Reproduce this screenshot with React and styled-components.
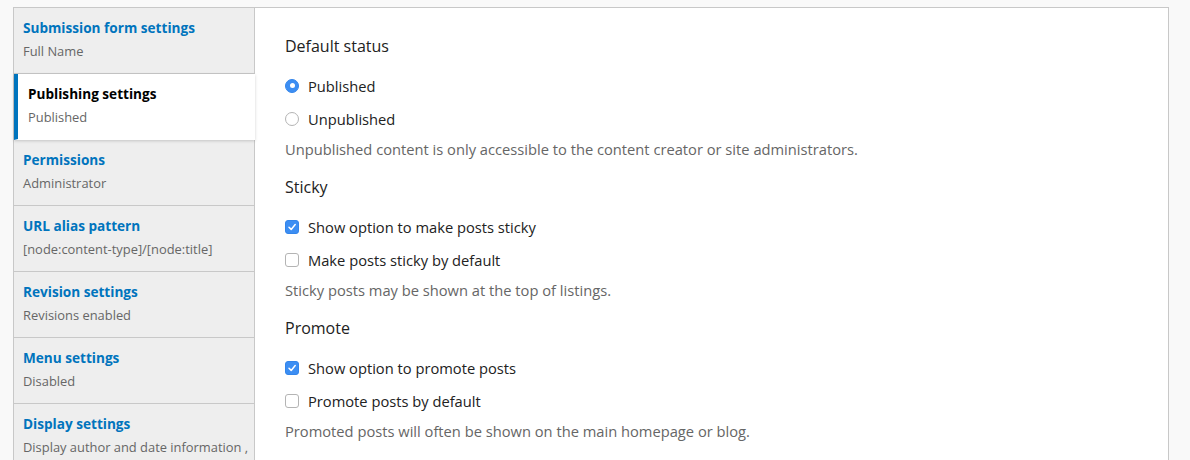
import React from "react";
import styled, { createGlobalStyle } from "styled-components";

const Global = createGlobalStyle`
  html, body { margin: 0; background: #f9f9f9; }
  body { font-family: "Open Sans", "Liberation Sans", sans-serif; color: #222; }
`;

const Page = styled.div`
  padding: 7px 21px 0 13px;
  height: 460px;
  box-sizing: border-box;
  overflow: hidden;
`;

const Tabs = styled.div`
  display: flex;
  border: 1px solid #c8c8c8;
  border-bottom: none;
  height: 460px;
  box-sizing: border-box;
`;

const Sidebar = styled.ul`
  list-style: none;
  margin: 0;
  padding: 0;
  width: 240px;
  flex-shrink: 0;
  background: #eeeeee;
  border-right: 1px solid #c8c8c8;
`;

const Item = styled.li`
  height: 66px;
  box-sizing: border-box;
  padding: ${p => (p.$active ? "10px 10px 0 10px" : "10px 10px 0 9px")};
  border-bottom: 1px solid #c8c8c8;
  position: relative;
  ${p =>
    p.$active &&
    `
    background: #fff;
    border-left: 4px solid #0074bd;
    margin-right: -1px;
    border-bottom-color: transparent;
    box-shadow: 0 1px 3px rgba(0,0,0,0.18);
    z-index: 1;
  `}
`;

const ItemTitle = styled.div`
  font-size: 13.6px;
  font-weight: 700;
  line-height: 19px;
  color: ${p => (p.$active ? "#000" : "#0074bd")};
`;

const ItemSummary = styled.div`
  margin-top: 6px;
  font-size: 12.9px;
  line-height: 17px;
  color: #666;
  white-space: nowrap;
`;

const Panel = styled.div`
  flex: 1;
  background: #fff;
  padding: 27px 31px 0 30px;
`;

const Group = styled.div`
  margin-bottom: 16px;
`;

const Heading = styled.div`
  font-size: 16px;
  line-height: 22px;
  color: #222;
  margin-bottom: 12px;
`;

const Option = styled.label`
  display: flex;
  align-items: center;
  gap: 9px;
  height: 33px;
  font-size: 14.7px;
  color: #222;
`;

const Radio = styled.span`
  width: 14px;
  height: 14px;
  box-sizing: border-box;
  border-radius: 50%;
  flex-shrink: 0;
  ${p =>
    p.$checked
      ? `background: #3c8ef3; border: 1px solid #3385ea; display:flex; align-items:center; justify-content:center;
         &::after { content: ""; width: 5px; height: 5px; border-radius: 50%; background: #fff; }`
      : `background: #fff; border: 1px solid #b4b4b4;`}
`;

const Box = styled.span`
  width: 14px;
  height: 14px;
  box-sizing: border-box;
  border-radius: 3px;
  flex-shrink: 0;
  display: flex;
  align-items: center;
  justify-content: center;
  ${p =>
    p.$checked
      ? `background: #3c8ef3; border: 1px solid #3385ea;`
      : `background: #fff; border: 1px solid #b4b4b4;`}
`;

const Desc = styled.div`
  font-size: 14.7px;
  line-height: 22px;
  color: #666;
  margin-top: 3px;
`;

const Check = () => (
  <svg width="10" height="10" viewBox="0 0 10 10">
    <path d="M2 5.2 L4.2 7.4 L8.2 2.6" fill="none" stroke="#fff" strokeWidth="1.5" strokeLinecap="round" strokeLinejoin="round" />
  </svg>
);

const items = [
  ["Submission form settings", "Full Name"],
  ["Publishing settings", "Published", true],
  ["Permissions", "Administrator"],
  ["URL alias pattern", "[node:content-type]/[node:title]"],
  ["Revision settings", "Revisions enabled"],
  ["Menu settings", "Disabled"],
  ["Display settings", "Display author and date information ,"],
];

export default function App() {
  return (
    <Page>
      <Global />
      <Tabs>
        <Sidebar>
          {items.map(([title, summary, active]) => (
            <Item key={title} $active={active}>
              <ItemTitle $active={active}>{title}</ItemTitle>
              <ItemSummary>{summary}</ItemSummary>
            </Item>
          ))}
        </Sidebar>
        <Panel>
          <Group>
            <Heading>Default status</Heading>
            <Option><Radio $checked />Published</Option>
            <Option><Radio />Unpublished</Option>
            <Desc>Unpublished content is only accessible to the content creator or site administrators.</Desc>
          </Group>
          <Group>
            <Heading>Sticky</Heading>
            <Option><Box $checked><Check /></Box>Show option to make posts sticky</Option>
            <Option><Box />Make posts sticky by default</Option>
            <Desc>Sticky posts may be shown at the top of listings.</Desc>
          </Group>
          <Group>
            <Heading>Promote</Heading>
            <Option><Box $checked><Check /></Box>Show option to promote posts</Option>
            <Option><Box />Promote posts by default</Option>
            <Desc>Promoted posts will often be shown on the main homepage or blog.</Desc>
          </Group>
        </Panel>
      </Tabs>
    </Page>
  );
}
